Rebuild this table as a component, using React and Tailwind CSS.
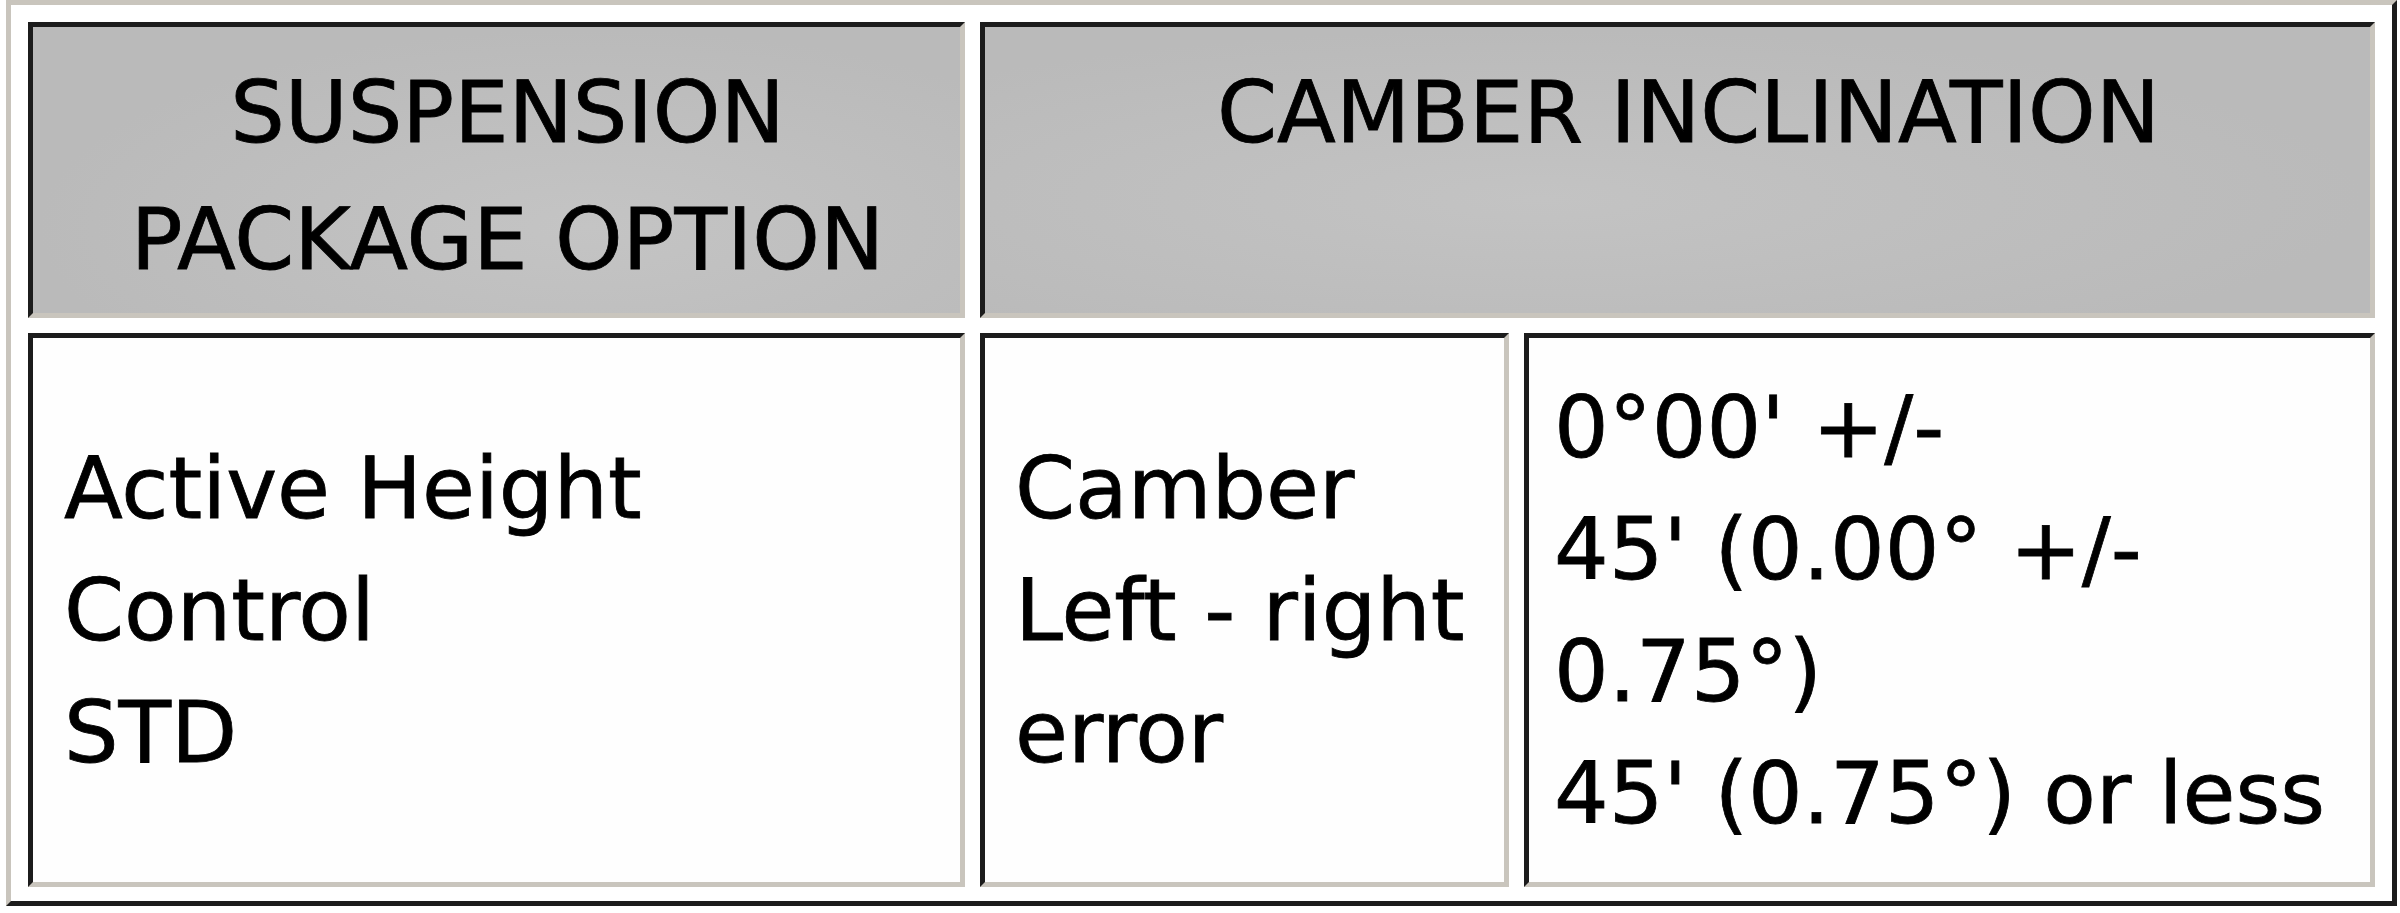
const font = { fontFamily: '"DejaVu Sans", Verdana, sans-serif' }

const Cell = ({ className = '', children }) => (
    <div
        className={`border-[5px] border-t-[#1c1c1c] border-l-[#1c1c1c] border-b-[#c9c5bd] border-r-[#c9c5bd] ${className}`}
    >
        {children}
    </div>
)

const Lines = ({ lines }) => (
    <div>
        {lines.map((l) => (
            <div key={l} className="whitespace-pre">
                {l}
            </div>
        ))}
    </div>
)

export default function App() {
    return (
        <div className="h-[913px] w-[2400px] bg-white text-black [-webkit-text-stroke:0.8px_#000]" style={font}>
            <div className="ml-[6px] h-[906px] w-[2391px] border-[5px] border-t-[#c9c5bd] border-l-[#c9c5bd] border-b-[#1c1c1c] border-r-[#1c1c1c] bg-white pt-[17px] pr-[17px] pb-[14px] pl-[17px]">
                <div className="grid grid-cols-[937px_529px_851px] grid-rows-[296px_554px] gap-[15px]">
                    {/* header */}
                    <Cell className="bg-[radial-gradient(ellipse_at_60%_70%,#c4c4c4,#bababa_70%)] pt-[22px] pl-[22px] text-center text-[86px] leading-[127px]">
                        <Lines lines={['SUSPENSION', 'PACKAGE OPTION']} />
                    </Cell>
                    <Cell className="col-span-2 bg-[radial-gradient(ellipse_at_40%_60%,#c3c3c3,#bababa_70%)] pt-[22px] pl-[22px] text-center text-[86px] leading-[127px]">
                        CAMBER INCLINATION
                    </Cell>

                    {/* body */}
                    <Cell className="flex items-center bg-[#fefefe] pl-[31px] text-[86px] leading-[122px]">
                        <Lines lines={['Active Height', 'Control', 'STD']} />
                    </Cell>
                    <Cell className="flex items-center bg-[#fefefe] pl-[30px] text-[86px] leading-[122px]">
                        <Lines lines={['Camber', 'Left - right', 'error']} />
                    </Cell>
                    <Cell className="flex items-center bg-[#fefefe] pl-[25px] text-[86px] leading-[122px]">
                        <Lines lines={["0°00' +/-", "45' (0.00° +/-", '0.75°)', "45' (0.75°) or less"]} />
                    </Cell>
                </div>
            </div>
        </div>
    )
}
